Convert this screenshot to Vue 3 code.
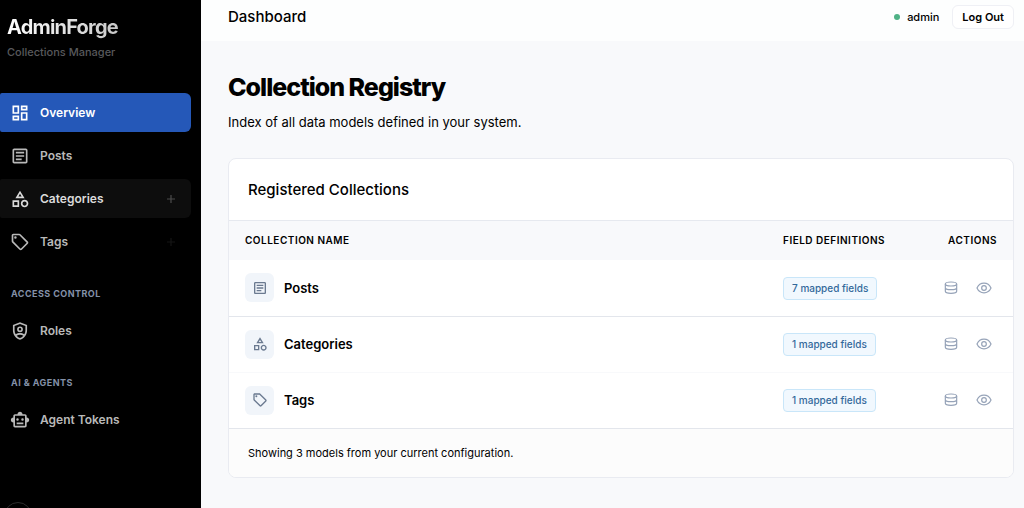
<script setup>
import { ref } from 'vue'

const icons = {
  dashboard:
    'M19 5v2h-4V5h4M9 5v6H5V5h4m10 8v6h-4v-6h4M9 17v2H5v-2h4M21 3h-8v6h8V3zM11 3H3v10h8V3zm10 8h-8v10h8V11zm-10 4H3v6h8v-6z',
  article:
    'M19 5v14H5V5h14m0-2H5c-1.1 0-2 .9-2 2v14c0 1.1.9 2 2 2h14c1.1 0 2-.9 2-2V5c0-1.1-.9-2-2-2zm-5 14H7v-2h7v2zm3-4H7v-2h10v2zm0-4H7V7h10v2z',
  category:
    'M12 2l-5.5 9h11L12 2zm0 3.84L13.93 9h-3.87L12 5.84zM17.5 13c-2.49 0-4.5 2.01-4.5 4.5s2.01 4.5 4.5 4.5 4.5-2.01 4.5-4.5-2.01-4.5-4.5-4.5zm0 7a2.5 2.5 0 0 1 0-5 2.5 2.5 0 0 1 0 5zM3 21.5h8v-8H3v8zm2-6h4v4H5v-4z',
  tag:
    'M21.41 11.41l-8.83-8.83c-.37-.37-.88-.58-1.41-.58H4c-1.1 0-2 .9-2 2v7.17c0 .53.21 1.04.59 1.41l8.83 8.83c.78.78 2.05.78 2.83 0l7.17-7.17c.78-.78.78-2.04-.01-2.83zM12.83 20L4 11.17V4h7.17L20 12.83 12.83 20zM6.5 5a1.5 1.5 0 1 0 0 3 1.5 1.5 0 0 0 0-3z',
  shield:
    'M12 1.5L3.5 4.7V11c0 5.3 3.6 10.2 8.5 11.5 4.9-1.3 8.5-6.2 8.5-11.5V4.7L12 1.5zM12 3.7l6.5 2.4V11c0 1.8-.5 3.5-1.3 5-1.5-.9-3.3-1.5-5.2-1.5s-3.7.6-5.2 1.5C6 14.5 5.5 12.8 5.5 11V6.1L12 3.7zm0 16.7c-1.5-.5-2.9-1.5-4-2.8 1.2-.7 2.5-1.1 4-1.1s2.8.4 4 1.1c-1.1 1.3-2.5 2.3-4 2.8zM12 6.5a3.5 3.5 0 1 0 0 7 3.5 3.5 0 0 0 0-7zm0 5a1.5 1.5 0 1 1 0-3 1.5 1.5 0 0 1 0 3z',
  robot:
    'M20 9V7c0-1.1-.9-2-2-2h-3c0-1.66-1.34-3-3-3S9 3.34 9 5H6c-1.1 0-2 .9-2 2v2c-1.66 0-3 1.34-3 3s1.34 3 3 3v4c0 1.1.9 2 2 2h12c1.1 0 2-.9 2-2v-4c1.66 0 3-1.34 3-3s-1.34-3-3-3zm-2 10H6V7h12v12zm-9-6a1.5 1.5 0 1 1 0-3 1.5 1.5 0 0 1 0 3zm7.5-1.5a1.5 1.5 0 1 1-3 0 1.5 1.5 0 0 1 3 0zM8 15h8v2H8v-2z'
}

const groups = [
  {
    items: [
      { label: 'Overview', icon: 'dashboard' },
      { label: 'Posts', icon: 'article' },
      { label: 'Categories', icon: 'category', add: 'shown' },
      { label: 'Tags', icon: 'tag', add: 'faint' }
    ]
  },
  { title: 'Access Control', items: [{ label: 'Roles', icon: 'shield' }] },
  { title: 'AI & Agents', items: [{ label: 'Agent Tokens', icon: 'robot' }] }
]

const current = ref('Overview')

const collections = [
  { name: 'Posts', icon: 'article', fields: 7 },
  { name: 'Categories', icon: 'category', fields: 1 },
  { name: 'Tags', icon: 'tag', fields: 1 }
]
</script>

<template>
  <div class="shell">
    <aside class="sidebar">
      <div class="brand">
        <div class="brand-name">AdminForge</div>
        <div class="brand-sub">Collections Manager</div>
      </div>
      <nav class="nav">
        <section v-for="(group, i) in groups" :key="i" class="group">
          <h2 v-if="group.title" class="group-title">{{ group.title }}</h2>
          <div
            v-for="item in group.items"
            :key="item.label"
            class="item"
            :class="{ active: current === item.label, hovered: item.add === 'shown' }"
          >
            <a href="#" class="item-link" @click.prevent="current = item.label">
              <svg class="item-icon" viewBox="0 0 24 24" aria-hidden="true"><path :d="icons[item.icon]" fill-rule="evenodd" /></svg>
              {{ item.label }}
            </a>
            <button v-if="item.add" type="button" class="add" :class="item.add" :aria-label="'Add to ' + item.label">
              <svg viewBox="0 0 10 10" aria-hidden="true"><path d="M5 1v8M1 5h8" /></svg>
            </button>
          </div>
        </section>
      </nav>
      <div class="account"><span class="avatar"></span></div>
    </aside>

    <div class="main">
      <header class="topbar">
        <div class="crumb">Dashboard</div>
        <div class="session">
          <span class="user"><i class="dot"></i>admin</span>
          <button type="button" class="logout">Log Out</button>
        </div>
      </header>

      <main class="content">
        <h1>Collection Registry</h1>
        <p class="lead">Index of all data models defined in your system.</p>

        <section class="card">
          <h2 class="card-title">Registered Collections</h2>
          <table>
            <thead>
              <tr>
                <th scope="col">Collection Name</th>
                <th scope="col" class="col-fields">Field Definitions</th>
                <th scope="col" class="col-actions">Actions</th>
              </tr>
            </thead>
            <tbody>
              <tr v-for="c in collections" :key="c.name">
                <td>
                  <div class="name">
                    <span class="tile"><svg viewBox="0 0 24 24" aria-hidden="true"><path :d="icons[c.icon]" fill-rule="evenodd" /></svg></span>
                    {{ c.name }}
                  </div>
                </td>
                <td><span class="badge">{{ c.fields }} mapped fields</span></td>
                <td>
                  <div class="actions">
                    <button type="button" :aria-label="'Data of ' + c.name">
                      <svg viewBox="0 0 24 24" aria-hidden="true">
                        <ellipse cx="12" cy="6" rx="8.5" ry="3" />
                        <path d="M3.5 6v11c0 1.7 3.8 3 8.5 3s8.5-1.3 8.5-3v-11M3.5 11.5c0 1.7 3.8 3 8.5 3s8.5-1.3 8.5-3" />
                      </svg>
                    </button>
                    <button type="button" :aria-label="'View ' + c.name">
                      <svg viewBox="0 0 24 24" aria-hidden="true">
                        <path d="M1.5 12C3.5 7.5 7.3 4.8 12 4.8S20.5 7.5 22.5 12c-2 4.5-5.8 7.2-10.5 7.2S3.5 16.5 1.5 12z" />
                        <circle cx="12" cy="12" r="3.5" />
                      </svg>
                    </button>
                  </div>
                </td>
              </tr>
            </tbody>
          </table>
          <footer class="card-foot">Showing 3 models from your current configuration.</footer>
        </section>
      </main>
    </div>
  </div>
</template>

<style>
body {
  margin: 0;
  background: #f8f9fb;
}
</style>

<style scoped>
* {
  box-sizing: border-box;
}

.shell {
  display: flex;
  height: 100vh;
  overflow: hidden;
  font-family: Inter, "Liberation Sans", sans-serif;
  color: #000;
}

h1,
h2,
p {
  margin: 0;
}

button {
  font-family: inherit;
  cursor: pointer;
}

.sidebar {
  display: flex;
  flex-direction: column;
  flex: 0 0 201px;
  overflow: hidden;
  background: #000;
  color: #b9b9b9;
}

.brand {
  padding: 14px 7px 0;
}

.brand-name {
  width: fit-content;
  font-size: 20px;
  line-height: 26px;
  font-weight: 700;
  letter-spacing: -0.04em;
  background: linear-gradient(90deg, #fff, #c8c8c8);
  background-clip: text;
  color: transparent;
}

.brand-sub {
  margin-top: 4px;
  font-size: 11px;
  line-height: 16px;
  font-weight: 500;
  color: #58595c;
}

.nav {
  padding: 33px 10px 0 0;
}

.item {
  display: flex;
  align-items: center;
  height: 39px;
  margin-bottom: 4px;
  padding: 0 15px 0 10px;
  border-radius: 2px 6px 6px 2px;
}

.item-link {
  display: flex;
  flex: 1;
  align-items: center;
  gap: 10px;
  color: inherit;
  font-size: 12px;
  line-height: 20px;
  font-weight: 600;
  text-decoration: none;
}

.item-icon {
  width: 20px;
  height: 20px;
  fill: currentColor;
}

.item.active {
  background: #2558b8;
  color: #fff;
}

.item.hovered {
  background: #0d0d0d;
  color: #dadada;
}

.add {
  display: flex;
  padding: 0;
  border: 0;
  background: none;
  color: #4c4c4c;
}

.add.faint {
  color: #151515;
}

.add svg {
  width: 10px;
  height: 10px;
  stroke: currentColor;
  stroke-width: 1.2;
}

.group-title {
  padding: 21px 11px 9px;
  font-size: 9px;
  line-height: 16px;
  font-weight: 700;
  letter-spacing: 0.05em;
  text-transform: uppercase;
  color: #8491a8;
}

.account {
  flex: none;
  padding: 59px 4px 0;
}

.avatar {
  display: block;
  width: 28px;
  height: 28px;
  border: 1px solid #2c2c2c;
  border-radius: 50%;
}

.main {
  flex: 1;
  min-width: 0;
  background: #f8f9fb;
}

.topbar {
  display: flex;
  align-items: flex-start;
  justify-content: space-between;
  height: 41px;
  padding: 5px 10px 0 27px;
  background: #fdfefe;
}

.crumb {
  font-size: 15px;
  line-height: 24px;
  font-weight: 500;
}

.session {
  display: flex;
  align-items: center;
  gap: 13px;
}

.user {
  display: flex;
  align-items: center;
  gap: 7px;
  font-size: 11px;
  font-weight: 500;
}

.dot {
  width: 6px;
  height: 6px;
  border-radius: 50%;
  background: #4fb286;
}

.logout {
  height: 24px;
  padding: 0 9px;
  border: 1px solid #eff0f5;
  border-radius: 6px;
  background: #fff;
  font-size: 11px;
  font-weight: 600;
  color: #000;
}

.content {
  padding: 30px 10px 0 27px;
}

h1 {
  font-size: 25px;
  line-height: 32px;
  font-weight: 800;
  letter-spacing: -0.04em;
  color: #000;
}

.lead {
  margin-top: 8px;
  font-size: 13px;
  line-height: 22px;
}

.card {
  margin-top: 25px;
  border: 1px solid #e9ebf1;
  border-radius: 8px;
  background: #fff;
  overflow: hidden;
}

.card-title {
  padding: 19px 19px 18px;
  font-size: 15px;
  line-height: 24px;
  font-weight: 500;
  border-bottom: 1px solid #e6e9ef;
}

table {
  width: 100%;
  border-collapse: collapse;
}

th {
  height: 39px;
  padding: 0 16px 2px;
  background: #f8f9fb;
  font-size: 10px;
  font-weight: 600;
  letter-spacing: 0.05em;
  text-align: left;
  text-transform: uppercase;
}

.col-fields {
  width: 154px;
}

.col-actions {
  width: 92px;
  text-align: right;
}

td {
  height: 56px;
  padding: 0 16px;
  border-bottom: 1px solid #e3e6ec;
}

tbody tr:nth-child(2) td {
  border-bottom-color: #f8f9fb;
}

.name {
  display: flex;
  align-items: center;
  gap: 10px;
  font-size: 13px;
  font-weight: 600;
}

.tile {
  display: flex;
  align-items: center;
  justify-content: center;
  width: 29px;
  height: 29px;
  border-radius: 6px;
  background: #f1f5fa;
}

.tile svg {
  width: 16px;
  height: 16px;
  fill: #6b7a90;
}

.badge {
  display: inline-block;
  padding: 0 8px;
  border: 1px solid #c9e6f9;
  border-radius: 4px;
  background: #f1f8fe;
  font-size: 10px;
  line-height: 21px;
  font-weight: 500;
  color: #33699b;
}

.actions {
  display: flex;
  justify-content: flex-end;
  gap: 17px;
  padding-right: 5px;
}

.actions button {
  display: flex;
  padding: 0;
  border: 0;
  background: none;
}

.actions svg {
  width: 16px;
  height: 16px;
  fill: none;
  stroke: #96a3b8;
  stroke-width: 1.8;
}

.card-foot {
  padding: 14px 19px;
  background: #fcfcfc;
  font-size: 11px;
  line-height: 20px;
}
</style>
